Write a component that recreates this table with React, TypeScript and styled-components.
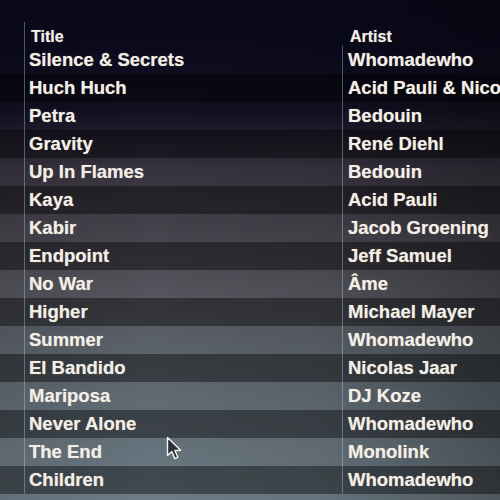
import React from 'react'
import styled, { createGlobalStyle } from 'styled-components'

const GlobalStyle = createGlobalStyle`
  html, body {
    margin: 0;
    padding: 0;
    background: #0a0a18;
  }
`

const tracks: [string, string][] = [
  ['Silence & Secrets', 'Whomadewho'],
  ['Huch Huch', 'Acid Pauli & Nico'],
  ['Petra', 'Bedouin'],
  ['Gravity', 'René Diehl'],
  ['Up In Flames', 'Bedouin'],
  ['Kaya', 'Acid Pauli'],
  ['Kabir', 'Jacob Groening'],
  ['Endpoint', 'Jeff Samuel'],
  ['No War', 'Âme'],
  ['Higher', 'Michael Mayer'],
  ['Summer', 'Whomadewho'],
  ['El Bandido', 'Nicolas Jaar'],
  ['Mariposa', 'DJ Koze'],
  ['Never Alone', 'Whomadewho'],
  ['The End', 'Monolink'],
  ['Children', 'Whomadewho'],
]

const Screen = styled.div`
  position: relative;
  width: 500px;
  height: 500px;
  overflow: hidden;
  padding-top: 22px;
  box-sizing: border-box;
  font-family: 'Liberation Sans', Arial, sans-serif;
  color: #f3efe6;
  background:
    linear-gradient(
      to right,
      rgba(0, 0, 0, 0.1) 0%,
      rgba(0, 0, 0, 0) 30%,
      rgba(0, 0, 0, 0.08) 65%,
      rgba(0, 0, 0, 0.3) 100%
    ),
    linear-gradient(
      to bottom,
      #09091a 0px,
      #0b0a1d 46px,
      #121021 110px,
      #37333f 170px,
      #44414a 228px,
      #52525a 285px,
      #5a6068 340px,
      #5f6a73 395px,
      #67737c 452px,
      #6e7c86 500px
    );
`

const Row = styled.div<{ $dark?: boolean; $header?: boolean }>`
  display: grid;
  grid-template-columns: 24px 318px 1fr;
  height: ${(p) => (p.$header ? 24 : 28)}px;
  background: ${(p) => (p.$dark ? 'rgba(0, 0, 0, 0.4)' : 'transparent')};
  font-size: ${(p) => (p.$header ? 16 : 18.5)}px;
  font-weight: bold;
  white-space: nowrap;
  text-shadow: 0 0 1px rgba(255, 250, 235, 0.5);
`

const Gutter = styled.div``

const TitleCell = styled.div<{ $header?: boolean }>`
  display: flex;
  align-items: center;
  padding: ${(p) => (p.$header ? '5px 0 0 6px' : '0 0 1px 4px')};
  border-left: 1px solid rgba(190, 200, 215, 0.4);
  overflow: hidden;
`

const ArtistCell = styled.div<{ $header?: boolean }>`
  display: flex;
  align-items: center;
  padding: ${(p) => (p.$header ? '5px 0 0 7px' : '0 0 1px 5px')};
  border-left: 1px solid
    ${(p) => (p.$header ? 'transparent' : 'rgba(190, 200, 215, 0.4)')};
  overflow: hidden;
`

const Pointer = styled.svg`
  position: absolute;
  left: 166px;
  top: 436px;
  width: 17px;
  height: 25px;
`

const Cursor = () => (
  <Pointer viewBox="0 0 17 25">
    <path
      d="M1.5 1.5 L1.5 19.5 L5.8 15.6 L8.8 22.6 L11.8 21.3 L8.9 14.5 L14.6 14.3 Z"
      fill="#2a2f36"
      stroke="#f4f4f0"
      strokeWidth="1.4"
      strokeLinejoin="round"
    />
  </Pointer>
)

export default function App() {
  return (
    <>
      <GlobalStyle />
      <Screen>
        <Row $header>
          <Gutter />
          <TitleCell $header>Title</TitleCell>
          <ArtistCell $header>Artist</ArtistCell>
        </Row>
        {tracks.map(([title, artist], i) => (
          <Row key={title} $dark={i % 2 === 1}>
            <Gutter />
            <TitleCell>{title}</TitleCell>
            <ArtistCell>{artist}</ArtistCell>
          </Row>
        ))}
        <Cursor />
      </Screen>
    </>
  )
}
